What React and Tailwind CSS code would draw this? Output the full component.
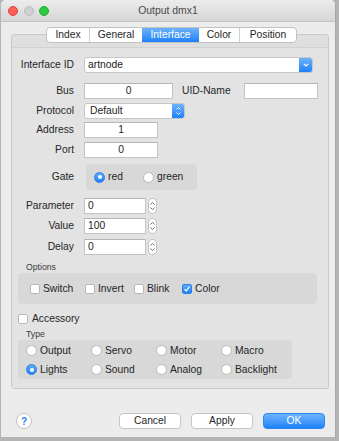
import React from 'react';

const Field = ({ w, value = '', align = 'left' }) => (
  <div
    className={`h-[16px] ${w} bg-white border border-[#c3c3c3] border-t-[#b5b5b5] flex items-center px-[3px] text-[10.3px] text-[#1d1d1d] ${align === 'center' ? 'justify-center' : ''}`}
  >
    {value}
  </div>
);

const Label = ({ children }) => (
  <div className="w-[62px] text-right text-[10.3px] text-[#262626] shrink-0">{children}</div>
);

const Stepper = () => (
  <div className="w-[9px] h-[16px] ml-[2px] bg-white border border-[#c3c3c3] rounded-[4px] flex flex-col items-center justify-center gap-[2px]">
    <svg width="5" height="3" viewBox="0 0 5 3"><path d="M0.5 2.5L2.5 0.5L4.5 2.5" stroke="#555" strokeWidth="0.9" fill="none" /></svg>
    <svg width="5" height="3" viewBox="0 0 5 3"><path d="M0.5 0.5L2.5 2.5L4.5 0.5" stroke="#555" strokeWidth="0.9" fill="none" /></svg>
  </div>
);

const Radio = ({ on }) =>
  on ? (
    <div className="w-[11px] h-[11px] rounded-full bg-gradient-to-b from-[#5eaaf9] to-[#1a7ff6] border border-[#2a7fe8] flex items-center justify-center shrink-0">
      <div className="w-[4px] h-[4px] rounded-full bg-white" />
    </div>
  ) : (
    <div className="w-[11px] h-[11px] rounded-full bg-white border border-[#b8b8b8] shrink-0" />
  );

const Check = ({ on }) =>
  on ? (
    <div className="w-[10px] h-[10px] rounded-[2px] bg-gradient-to-b from-[#5eaaf9] to-[#1a7ff6] border border-[#2a7fe8] flex items-center justify-center shrink-0">
      <svg width="8" height="8" viewBox="0 0 8 8"><path d="M1.5 4.2L3.2 6L6.5 1.5" stroke="white" strokeWidth="1.2" fill="none" /></svg>
    </div>
  ) : (
    <div className="w-[10px] h-[10px] rounded-[2px] bg-white border border-[#b8b8b8] shrink-0" />
  );

const Button = ({ children, primary }) => (
  <div
    className={`w-[62px] h-[16px] rounded-[4px] flex items-center justify-center text-[10.3px] ${
      primary
        ? 'bg-gradient-to-b from-[#6db3fb] to-[#1b82fa] border border-[#2f86ee] text-white'
        : 'bg-white border border-[#c6c6c6] text-[#262626]'
    }`}
  >
    {children}
  </div>
);

const tabs = ['Index', 'General', 'Interface', 'Color', 'Position'];
const tabWidths = ['w-[42px]', 'w-[53px]', 'w-[57px]', 'w-[40px]', 'w-[57px]'];

const types = [
  ['Output', 'Servo', 'Motor', 'Macro'],
  ['Lights', 'Sound', 'Analog', 'Backlight'],
];

export default function App() {
  return (
    <div className="w-[339px] h-[441px] bg-[#b4b4b4] overflow-hidden font-['Liberation_Sans',Arial,sans-serif]">
      <div className="ml-[1px] w-[335px] h-[437px] bg-[#ececec] rounded-t-[5px] border-r border-[#a8a8a8] flex flex-col">
        {/* title bar */}
        <div className="h-[22px] relative flex items-center justify-center rounded-t-[5px] bg-gradient-to-b from-[#ececec] to-[#d6d6d6] border-b border-[#c2c2c2]">
          <div className="absolute left-[7px] top-[6px] flex gap-[5.5px]">
            <div className="w-[10px] h-[10px] rounded-full bg-[#fc5f57] border border-[#e0443e]" />
            <div className="w-[10px] h-[10px] rounded-full bg-[#d0d0d0] border border-[#bdbdbd]" />
            <div className="w-[10px] h-[10px] rounded-full bg-[#2cc940] border border-[#1fae31]" />
          </div>
          <span className="text-[10.4px] text-[#4a4a4a]">Output dmx1</span>
        </div>

        {/* tab view */}
        <div className="mt-[12px] ml-[10px] w-[318px] h-[355px] border border-[#c9c9c9] bg-[#dfdfdf] rounded-[3px] flex flex-col">
          <div className="-mt-[8px] ml-[34px] flex h-[16px] bg-white border border-[#c2c2c2] rounded-[4px] overflow-hidden self-start">
            {tabs.map((t, i) => (
              <div
                key={t}
                className={`${tabWidths[i]} flex items-center justify-center text-[10.3px] ${
                  i === 2
                    ? 'bg-gradient-to-b from-[#6bb2fb] to-[#1a80f8] text-white'
                    : 'text-[#262626]'
                } ${i > 0 && i !== 2 && i !== 3 ? 'border-l border-[#cfcfcf]' : ''}`}
              >
                {t}
              </div>
            ))}
          </div>

          {/* content */}
          <div className="mt-[4px] flex-1 bg-[#e3e3e3] border-t border-[#d2d2d2] flex flex-col">
            <div className="mt-[9px] flex items-center gap-[10px]">
              <Label>Interface ID</Label>
              <div className="w-[229px] h-[16px] bg-white border border-[#c6c6c6] rounded-[3px] flex items-center overflow-hidden">
                <span className="flex-1 pl-[3px] text-[10.3px] text-[#1d1d1d]">artnode</span>
                <div className="w-[13px] h-full bg-gradient-to-b from-[#6bb2fb] to-[#1a80f8] flex items-center justify-center">
                  <svg width="6" height="4" viewBox="0 0 6 4"><path d="M0.8 0.8L3 3L5.2 0.8" stroke="white" strokeWidth="1.1" fill="none" /></svg>
                </div>
              </div>
            </div>

            <div className="mt-[10px] flex items-center gap-[10px]">
              <Label>Bus</Label>
              <Field w="w-[89px]" value="0" align="center" />
              <span className="ml-[-1px] w-[52px] text-[10.3px] text-[#262626]">UID-Name</span>
              <Field w="w-[74px]" />
            </div>

            <div className="mt-[4px] flex items-center gap-[10px]">
              <Label>Protocol</Label>
              <div className="w-[101px] h-[16px] bg-white border border-[#c6c6c6] rounded-[3px] flex items-center overflow-hidden">
                <span className="flex-1 pl-[5px] text-[10.3px] text-[#1d1d1d]">Default</span>
                <div className="w-[12px] h-full bg-gradient-to-b from-[#6bb2fb] to-[#1a80f8] flex flex-col items-center justify-center gap-[2px]">
                  <svg width="5" height="3" viewBox="0 0 5 3"><path d="M0.5 2.5L2.5 0.5L4.5 2.5" stroke="white" strokeWidth="0.9" fill="none" /></svg>
                  <svg width="5" height="3" viewBox="0 0 5 3"><path d="M0.5 0.5L2.5 2.5L4.5 0.5" stroke="white" strokeWidth="0.9" fill="none" /></svg>
                </div>
              </div>
            </div>

            <div className="mt-[3px] flex items-center gap-[10px]">
              <Label>Address</Label>
              <Field w="w-[74px]" value="1" align="center" />
            </div>
            <div className="mt-[4px] flex items-center gap-[10px]">
              <Label>Port</Label>
              <Field w="w-[74px]" value="0" align="center" />
            </div>

            <div className="mt-[6px] flex items-center gap-[12px]">
              <Label>Gate</Label>
              <div className="w-[111px] h-[26px] bg-[#d8d8d8] rounded-[4px] flex items-center text-[10.3px] text-[#262626]">
                <div className="ml-[8px] w-[49px] flex items-center gap-[3px]">
                  <Radio on />
                  <span>red</span>
                </div>
                <div className="flex items-center gap-[3px]">
                  <Radio />
                  <span>green</span>
                </div>
              </div>
            </div>

            {[
              ['Parameter', '0', 'mt-[8px]'],
              ['Value', '100', 'mt-[4px]'],
              ['Delay', '0', 'mt-[5px]'],
            ].map(([l, v, m]) => (
              <div key={l} className={`${m} flex items-center gap-[10px]`}>
                <Label>{l}</Label>
                <div className="flex items-center">
                  <Field w="w-[62px]" value={v} />
                  <Stepper />
                </div>
              </div>
            ))}

            <div className="mt-[7px] ml-[14px] text-[8.7px] text-[#3a3a3a] leading-[10px]">Options</div>
            <div className="mt-[1px] ml-[6px] w-[299px] h-[31px] bg-[#d8d8d8] rounded-[4px] flex items-center text-[10.3px] text-[#262626]">
              <div className="ml-[12px] w-[55px] flex items-center gap-[3px]"><Check /><span>Switch</span></div>
              <div className="w-[49px] flex items-center gap-[3px]"><Check /><span>Invert</span></div>
              <div className="w-[48px] flex items-center gap-[3px]"><Check /><span>Blink</span></div>
              <div className="flex items-center gap-[3px]"><Check on /><span>Color</span></div>
            </div>

            <div className="mt-[7px] ml-[6px] flex items-center gap-[4px] text-[10.3px] text-[#262626]">
              <Check />
              <span>Accessory</span>
            </div>

            <div className="mt-[3px] ml-[14px] text-[8.7px] text-[#3a3a3a] leading-[10px]">Type</div>
            <div className="mt-[1px] ml-[6px] w-[274px] h-[39px] bg-[#d8d8d8] rounded-[4px] flex flex-col justify-center gap-[4px] text-[10.3px] text-[#262626]">
              {types.map((row, r) => (
                <div key={r} className="ml-[8px] flex">
                  {row.map((t, c) => (
                    <div key={t} className="w-[65px] flex items-center gap-[3px]">
                      <Radio on={r === 1 && c === 0} />
                      <span>{t}</span>
                    </div>
                  ))}
                </div>
              ))}
            </div>
          </div>
        </div>

        {/* footer */}
        <div className="mt-[24px] flex items-center">
          <div className="ml-[15px] w-[16px] h-[16px] rounded-full bg-white border border-[#c2c2c2] flex items-center justify-center text-[10px] font-bold text-[#2a80f0]">
            ?
          </div>
          <div className="ml-[87px] flex gap-[10px]">
            <Button>Cancel</Button>
            <Button>Apply</Button>
            <Button primary>OK</Button>
          </div>
        </div>
      </div>
    </div>
  );
}
